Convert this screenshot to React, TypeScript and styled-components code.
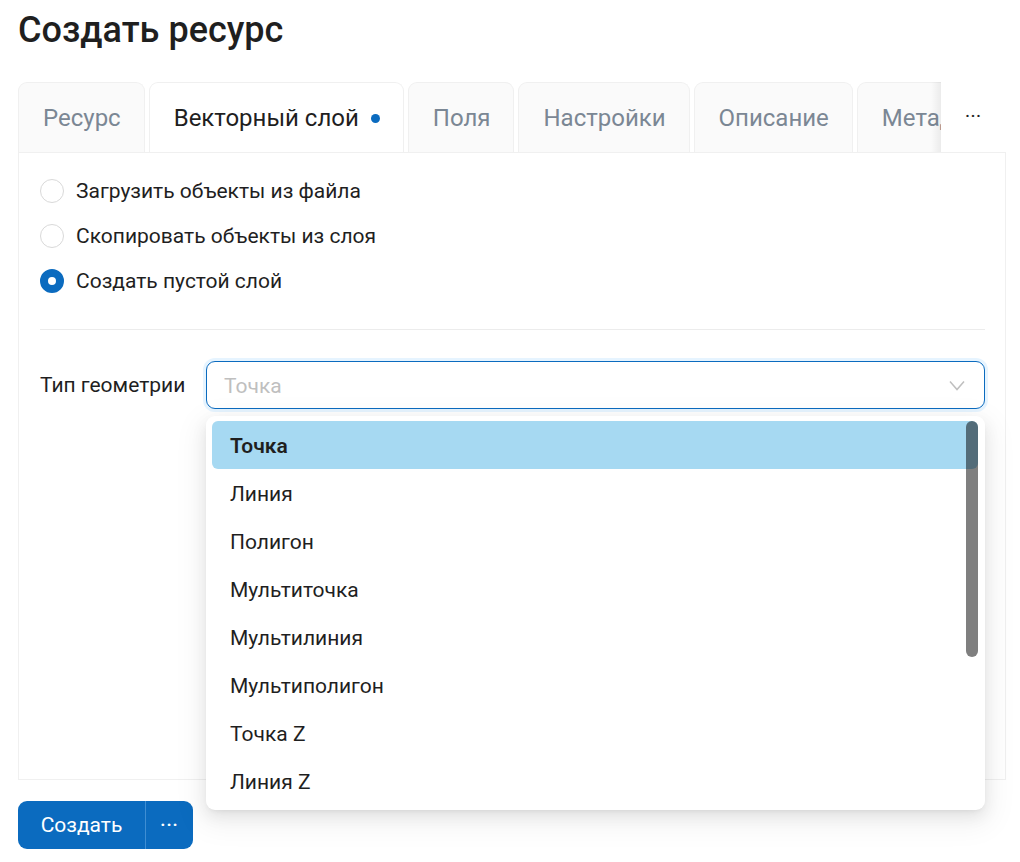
import React, { useState } from "react";
import styled, { createGlobalStyle } from "styled-components";

const PRIMARY = "#0b6bbf";
const TEXT = "#1f1f1f";

const GlobalStyle = createGlobalStyle`
  body {
    margin: 0;
    background: #ffffff;
    font-family: Roboto, "Noto Sans", "Liberation Sans", sans-serif;
    color: ${TEXT};
  }
  * { box-sizing: border-box; }
`;

const tabs = [
  { key: "resource", label: "Ресурс" },
  { key: "vector", label: "Векторный слой", dot: true },
  { key: "fields", label: "Поля" },
  { key: "settings", label: "Настройки" },
  { key: "description", label: "Описание" },
  { key: "meta", label: "Метаданные" },
];

const sources = [
  "Загрузить объекты из файла",
  "Скопировать объекты из слоя",
  "Создать пустой слой",
];

const geometryTypes = [
  "Точка",
  "Линия",
  "Полигон",
  "Мультиточка",
  "Мультилиния",
  "Мультиполигон",
  "Точка Z",
  "Линия Z",
  "Полигон Z",
  "Мультиточка Z",
  "Мультилиния Z",
  "Мультиполигон Z",
];

export default function App() {
  const [activeTab, setActiveTab] = useState("vector");
  const [source, setSource] = useState(2);

  return (
    <>
      <GlobalStyle />
      <Page>
        <Title>Создать ресурс</Title>

        <TabBar>
          <NavWrap>
            <NavList>
              {tabs.map((t) => (
                <Tab
                  key={t.key}
                  $active={t.key === activeTab}
                  onClick={() => setActiveTab(t.key)}
                >
                  {t.label}
                  {t.dot && <Dot />}
                </Tab>
              ))}
            </NavList>
          </NavWrap>
          <MoreTabs>···</MoreTabs>
        </TabBar>

        <Panel>
          <RadioGroup>
            {sources.map((s, i) => (
              <RadioRow key={s} onClick={() => setSource(i)}>
                <RadioCircle $checked={source === i} />
                {s}
              </RadioRow>
            ))}
          </RadioGroup>

          <Divider />

          <FormRow>
            <FieldLabel>Тип геометрии</FieldLabel>
            <SelectWrap>
              <SelectBox>
                <Placeholder>Точка</Placeholder>
                <svg width="16" height="11" viewBox="0 0 16 11" fill="none">
                  <path d="M1 1.5l7 8 7-8" stroke="#bfbfbf" strokeWidth="1.5" />
                </svg>
              </SelectBox>

              <Dropdown>
                <OptionList>
                  {geometryTypes.map((g, i) => (
                    <Option key={g} $selected={i === 0}>
                      {g}
                    </Option>
                  ))}
                </OptionList>
                <ScrollThumb />
              </Dropdown>
            </SelectWrap>
          </FormRow>
        </Panel>

        <ButtonGroup>
          <PrimaryButton>Создать</PrimaryButton>
          <PrimaryButton $compact>···</PrimaryButton>
        </ButtonGroup>
      </Page>
    </>
  );
}

const Page = styled.div`
  padding: 10px 14px 0 18px;
`;

const Title = styled.h1`
  margin: 0 0 32px;
  font-size: 36px;
  line-height: 40px;
  font-weight: 500;
  color: ${TEXT};
`;

const TabBar = styled.div`
  display: flex;
  align-items: stretch;
  height: 70px;
`;

const NavWrap = styled.div`
  position: relative;
  flex: 0 0 923px;
  overflow: hidden;

  &::after {
    content: "";
    position: absolute;
    top: 0;
    right: 0;
    bottom: 0;
    width: 10px;
    background: linear-gradient(to right, rgba(0, 0, 0, 0), rgba(0, 0, 0, 0.06));
    pointer-events: none;
  }
`;

const NavList = styled.div`
  display: flex;
  gap: 4px;
  height: 100%;
`;

const Tab = styled.div<{ $active?: boolean }>`
  flex: none;
  display: flex;
  align-items: center;
  gap: 12px;
  padding: 0 23px 0 24px;
  font-size: 24px;
  white-space: nowrap;
  cursor: pointer;
  border: 1px solid #f0f0f0;
  border-bottom: none;
  border-radius: 9px 9px 0 0;
  background: ${(p) => (p.$active ? "#ffffff" : "#fafafa")};
  color: ${(p) => (p.$active ? TEXT : "#7b8794")};
  position: relative;
  z-index: ${(p) => (p.$active ? 2 : 0)};
  height: ${(p) => (p.$active ? "71px" : "70px")};
`;

const Dot = styled.span`
  width: 9px;
  height: 9px;
  border-radius: 50%;
  background: ${PRIMARY};
`;

const MoreTabs = styled.div`
  flex: 1;
  display: flex;
  align-items: center;
  justify-content: center;
  padding-bottom: 2px;
  font-size: 15px;
  font-weight: 700;
  letter-spacing: 1px;
  color: ${TEXT};
`;

const Panel = styled.div`
  position: relative;
  height: 628px;
  border: 1px solid #f0f0f0;
  padding: 15px 20px 0 21px;
  background: #ffffff;
`;

const RadioGroup = styled.div`
  display: flex;
  flex-direction: column;
`;

const RadioRow = styled.label`
  display: flex;
  align-items: center;
  gap: 12px;
  height: 45px;
  font-size: 21px;
  color: ${TEXT};
  cursor: pointer;
`;

const RadioCircle = styled.span<{ $checked?: boolean }>`
  flex: none;
  width: 24px;
  height: 24px;
  border-radius: 50%;
  background: #ffffff;
  border: ${(p) => (p.$checked ? `8px solid ${PRIMARY}` : "1px solid #d9d9d9")};
`;

const Divider = styled.hr`
  margin: 26px 0 31px;
  border: none;
  border-top: 1px solid #ececec;
`;

const FormRow = styled.div`
  display: flex;
  align-items: flex-start;
`;

const FieldLabel = styled.div`
  flex: 0 0 166px;
  height: 48px;
  display: flex;
  align-items: center;
  font-size: 21px;
  color: ${TEXT};
`;

const SelectWrap = styled.div`
  position: relative;
  flex: 1;
`;

const SelectBox = styled.div`
  height: 48px;
  display: flex;
  align-items: center;
  justify-content: space-between;
  padding: 1px 19px 0 17px;
  border: 1px solid ${PRIMARY};
  border-radius: 9px;
  box-shadow: 0 0 0 3px rgba(5, 145, 255, 0.1);
  background: #ffffff;
`;

const Placeholder = styled.span`
  font-size: 21px;
  color: #bfbfbf;
`;

const Dropdown = styled.div`
  position: absolute;
  top: 55px;
  left: 0;
  right: 0;
  z-index: 10;
  height: 394px;
  padding: 5px 7px 5px 6px;
  background: #ffffff;
  border-radius: 9px;
  box-shadow: 0 6px 16px 0 rgba(0, 0, 0, 0.08), 0 3px 6px -4px rgba(0, 0, 0, 0.12),
    0 9px 28px 8px rgba(0, 0, 0, 0.05);
  overflow: hidden;
`;

const OptionList = styled.div`
  height: 384px;
  overflow: hidden;
`;

const Option = styled.div<{ $selected?: boolean }>`
  height: 48px;
  display: flex;
  align-items: center;
  padding: 1px 18px 0;
  border-radius: 6px;
  font-size: 21px;
  font-weight: ${(p) => (p.$selected ? 600 : 400)};
  color: ${TEXT};
  background: ${(p) => (p.$selected ? "#a6d9f2" : "transparent")};
`;

const ScrollThumb = styled.div`
  position: absolute;
  top: 5px;
  right: 7px;
  width: 12px;
  height: 236px;
  border-radius: 6px;
  background: rgba(0, 0, 0, 0.5);
`;

const ButtonGroup = styled.div`
  display: flex;
  margin-top: 21px;
`;

const PrimaryButton = styled.button<{ $compact?: boolean }>`
  height: 48px;
  width: ${(p) => (p.$compact ? "48px" : "127px")};
  border: none;
  background: ${PRIMARY};
  color: #ffffff;
  font-family: inherit;
  font-size: ${(p) => (p.$compact ? "17px" : "21px")};
  font-weight: ${(p) => (p.$compact ? 700 : 400)};
  letter-spacing: ${(p) => (p.$compact ? "1px" : "0")};
  border-radius: ${(p) => (p.$compact ? "0 9px 9px 0" : "9px 0 0 9px")};
  border-left: ${(p) => (p.$compact ? "1px solid #3f8ed3" : "none")};
  cursor: pointer;
`;
